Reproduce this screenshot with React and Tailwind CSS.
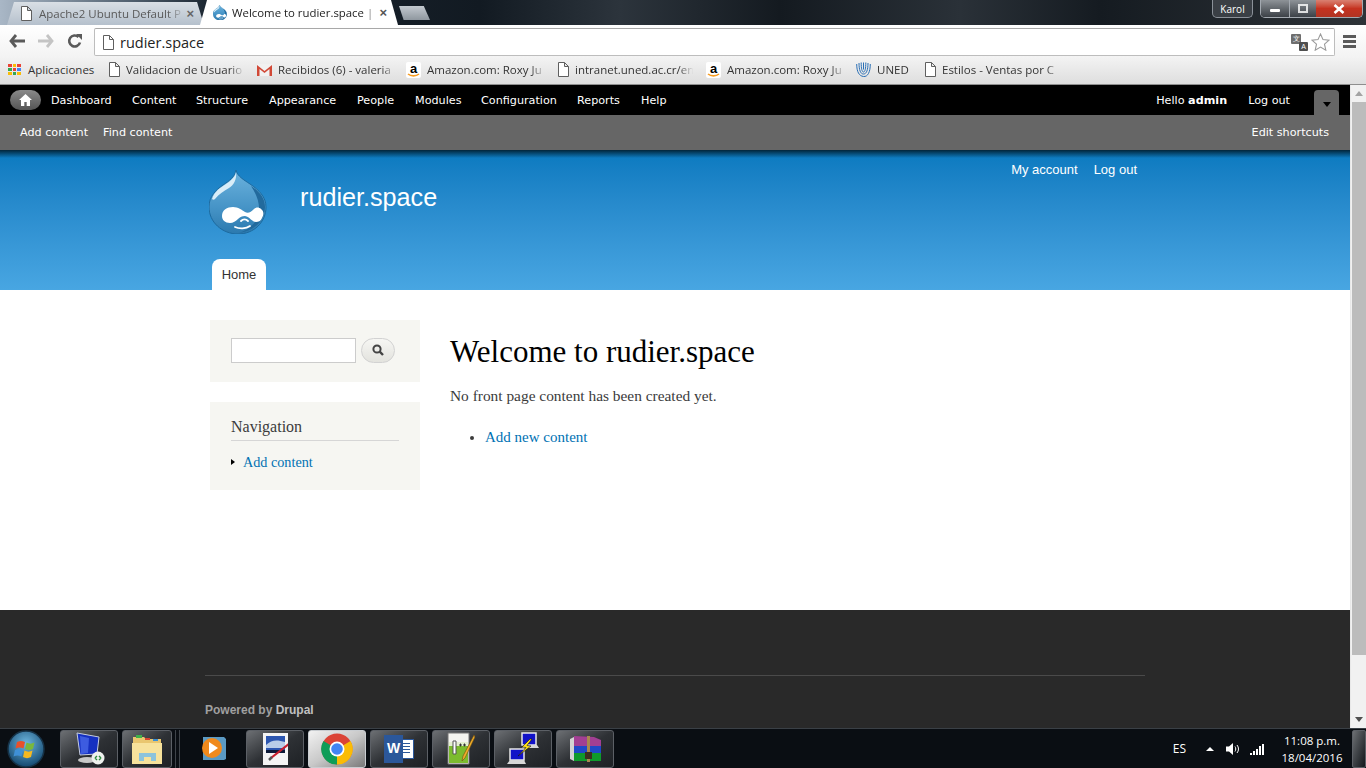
const adminLinks = [
  ['Dashboard', 'w-[81px]'],
  ['Content', 'w-[64px]'],
  ['Structure', 'w-[73px]'],
  ['Appearance', 'w-[88px]'],
  ['People', 'w-[58px]'],
  ['Modules', 'w-[66px]'],
  ['Configuration', 'w-[96px]'],
  ['Reports', 'w-[64px]'],
  ['Help', 'w-[40px]'],
];

const bookmarks = [
  { icon: 'doc', label: 'Validacion de Usuario', w: 'w-[149px]' },
  { icon: 'gmail', label: 'Recibidos (6) - valeria', w: 'w-[149px]' },
  { icon: 'amazon', label: 'Amazon.com: Roxy Ju', w: 'w-[151px]' },
  { icon: 'doc', label: 'intranet.uned.ac.cr/en', w: 'w-[149px]' },
  { icon: 'amazon', label: 'Amazon.com: Roxy Ju', w: 'w-[150px]' },
  { icon: 'uned', label: 'UNED', w: 'w-[68px]' },
  { icon: 'doc', label: 'Estilos - Ventas por C', w: 'w-[150px]' },
];

const DocIcon = () => (
  <svg width="12" height="15" viewBox="0 0 12 15" className="shrink-0">
    <path d="M1.5.5h6l4 4v10h-10z M7.5.5v4h4" fill="#fff" stroke="#5f5f5f" />
  </svg>
);

const GmailIcon = () => (
  <svg width="15" height="12" viewBox="0 0 15 12" className="shrink-0">
    <path d="M0 0h15v12H0z" fill="#f1f1f1" />
    <path d="M0 1l7.500 6L15 1v11h-2.500V5L7.500 9 2.500 5v7H0z" fill="#d14836" />
  </svg>
);

const AmazonIcon = () => (
  <div className="relative w-[15px] h-[16px] bg-white rounded-[2px] shrink-0 flex justify-center">
    <span className="font-['Liberation_Sans',sans-serif] font-bold text-[13px] leading-[13px] text-black">a</span>
    <svg width="13" height="5" viewBox="0 0 13 5" className="absolute left-px bottom-0">
      <path d="M1 1c3 2.500 8 2.500 11 0" fill="none" stroke="#f79c20" strokeWidth="1.600" />
    </svg>
  </div>
);

const UnedIcon = () => (
  <svg width="15" height="15" viewBox="0 0 15 15" className="shrink-0" fill="none" stroke="#2a6fb5">
    <path d="M.7 2c0 8 2.500 12 6.800 12.500S14.300 10 14.300 2" />
    <path d="M3 1c0 7 1.500 11 4.500 11S12 8 12 1" />
    <path d="M5.200 .5c0 6 .7 9.500 2.300 9.500s2.300-3.500 2.300-9.500" />
    <path d="M7.500 .5v7" />
  </svg>
);

const bookmarkIcons = { doc: DocIcon, gmail: GmailIcon, amazon: AmazonIcon, uned: UnedIcon };

// the drupal drop, used big in the header and small in the tab
const DrupalDrop = ({ size = 58 }) => (
  <svg width={size} height={size * 64 / 58} viewBox="0 0 58 64" className="shrink-0">
    <defs>
      <linearGradient id="dropFill" x1="0" y1="0" x2="0" y2="1">
        <stop offset="0" stopColor="#6cb3de" />
        <stop offset="0.6" stopColor="#4593c6" />
        <stop offset="1" stopColor="#2b79ae" />
      </linearGradient>
    </defs>
    <path d="M27 0c1 6 8 10 14 14 9 6 16 13 16 23 0 15-12 27-28 27S0 52 0 37c0-11 7-17 14-22C20 11 26 7 27 0z" fill="url(#dropFill)" stroke="#1c6a9f" strokeWidth="1" />
    <path d="M27 2c-1 6-7 10-13 14-5 3-9 7-11 13 1 1 2 1 3 0 4-5 9-8 14-11 5-3 8-9 7-16z" fill="#d9edf8" />
    <path d="M42 16c8 5 14 12 14 21 0 6-2 11-5 15-5 6-12 10-21 11 9-3 16-9 19-16 3-9 0-21-7-31z" fill="#226a9d" />
    <path d="M13 46c0-6 5-9 11-9 5 0 9 3 12 5 3 2 6 0 9-3 2-2 5-2 7 0 3 2 3 6 1 9-1 3-4 4-6 4-4 0-6-5-11-6-3 0-5 1-7 3-2 2-5 4-8 4-5 0-8-3-8-7z" fill="#fff" />
    <path d="M26 57c4 2 11 2 15-1M32 51c2-2 5-2 7 0" fill="none" stroke="#fff" strokeWidth="1.800" strokeLinecap="round" />
  </svg>
);

const WindowControls = () => (
  <div className="flex items-start gap-[7px] pr-[3px] text-white">
    <div className="w-[41px] h-[18px] rounded-b-[5px] border border-t-0 border-[#8b9199] bg-[#3a3f45] flex items-center justify-center font-['Open_Sans',sans-serif] text-[10px] leading-none">
      Karol
    </div>
    <div className="flex w-[103px] h-[18px] rounded-b-[5px] border border-t-0 border-[#a3a9b0] overflow-hidden">
      <div className="w-[29px] bg-gradient-to-b from-[#8e9398] to-[#3c4147] border-r border-[#a3a9b0] flex items-center justify-center">
        <div className="w-[10px] h-[3px] mt-[4px] bg-white rounded-[1px]" />
      </div>
      <div className="w-[26px] bg-gradient-to-b from-[#8e9398] to-[#3c4147] flex items-center justify-center">
        <div className="w-[10px] h-[9px] border-2 border-white/80" />
      </div>
      <div className="flex-1 bg-gradient-to-b from-[#d98071] via-[#c5321f] to-[#b03423] flex items-center justify-center">
        <svg width="12" height="10" viewBox="0 0 12 10">
          <path d="M1.500 1l9 8m0-8l-9 8" stroke="#fff" strokeWidth="2.600" />
        </svg>
      </div>
    </div>
  </div>
);

const TabStrip = () => (
  <div className="h-[25px] flex items-end bg-[linear-gradient(90deg,#a9b7c6_0px,#51606f_130px,#1a2530_210px,#121a22_480px,#2c343c_620px,#141a20_780px,#2a3138_960px,#151b21_1100px,#2e3338_1366px)]">
    <div className="w-[7px]" />
    <div className="w-[197px] h-[23px] pl-[13px] pr-[10px] flex items-center bg-gradient-to-b from-[#d9dfe5] to-[#b5c0cc] [clip-path:polygon(7px_0,calc(100%-7px)_0,100%_100%,0_100%)]">
      <DocIcon />
      <span className="ml-[7px] w-[146px] overflow-hidden whitespace-nowrap text-[11.5px] text-[#5a5a5a] font-['Open_Sans',sans-serif] [mask-image:linear-gradient(90deg,#000_88%,transparent)]">
        Apache2 Ubuntu Default P
      </span>
      <span className="ml-auto text-[13px] leading-none font-bold text-[#666] font-['Liberation_Sans',sans-serif]">×</span>
    </div>
    <div className="w-[198px] -ml-[4px] h-[25px] pl-[13px] pr-[11px] flex items-center bg-white [clip-path:polygon(7px_0,calc(100%-7px)_0,100%_100%,0_100%)]">
      <DrupalDrop size={14} />
      <span className="ml-[5px] w-[146px] overflow-hidden whitespace-nowrap text-[11.4px] text-[#222] font-['Open_Sans',sans-serif] [mask-image:linear-gradient(90deg,#000_90%,transparent)]">
        Welcome to rudier.space |
      </span>
      <span className="ml-auto text-[13px] leading-none font-bold text-[#555] font-['Liberation_Sans',sans-serif]">×</span>
    </div>
    <div className="w-[31px] h-[14px] mb-[5px] ml-[1px] bg-gradient-to-b from-[#c3c9cf] to-[#8f979f] [clip-path:polygon(0_0,80%_0,100%_100%,15%_100%)]" />
    <div className="ml-auto self-start">
      <WindowControls />
    </div>
  </div>
);

const Toolbar = () => (
  <div className="h-[32px] bg-gradient-to-b from-white to-[#f3f3f3] flex items-center pl-[9px] pr-[9px]">
    <svg width="16" height="14" viewBox="0 0 16 14" className="shrink-0">
      <path d="M7 1L2 7l5 6M2.500 7H16" fill="none" stroke="#5a5a5a" strokeWidth="2.800" />
    </svg>
    <svg width="16" height="14" viewBox="0 0 16 14" className="ml-[13px] shrink-0">
      <path d="M9 1l5 6-5 6M13.500 7H0" fill="none" stroke="#c4c4c4" strokeWidth="2.800" />
    </svg>
    <svg width="16" height="16" viewBox="0 0 16 16" className="ml-[13px] shrink-0">
      <path d="M13 9.500A5.500 5.500 0 1 1 11.500 4" fill="none" stroke="#5a5a5a" strokeWidth="2.600" />
      <path d="M9 1h6v6z" fill="#5a5a5a" />
    </svg>
    <div className="ml-[11px] w-[1241px] h-[28px] mt-[2px] bg-white border border-[#bdbdbd] border-t-[#a8a8a8] rounded-[2px] flex items-center pl-[7px] pr-[4px]">
      <DocIcon />
      <span className="ml-[6px] pt-[2px] text-[14.5px] text-[#222] font-['Open_Sans',sans-serif]">rudier.space</span>
      <div className="ml-auto flex items-center gap-[3px]">
        <div className="relative w-[17px] h-[17px]">
          <div className="absolute left-0 top-0 w-[10px] h-[10px] bg-[#6e6e6e] rounded-[1px] text-white text-[7px] leading-[10px] text-center">文</div>
          <div className="absolute right-0 bottom-0 w-[9px] h-[9px] bg-[#4f4f4f] rounded-[1px] text-white text-[7px] leading-[9px] text-center font-['Liberation_Sans',sans-serif]">A</div>
        </div>
        <svg width="19" height="18" viewBox="0 0 19 18">
          <path d="M9.500 1l2.500 5.600 6 .6-4.500 4 1.300 6-5.300-3.100-5.300 3.100 1.300-6-4.500-4 6-.6z" fill="#fff" stroke="#9a9a9a" strokeWidth="1.100" />
        </svg>
      </div>
    </div>
    <div className="ml-[8px] flex flex-col gap-[2px]">
      <div className="w-[13px] h-[3px] bg-[#5a5a5a]" />
      <div className="w-[13px] h-[3px] bg-[#5a5a5a]" />
      <div className="w-[13px] h-[3px] bg-[#5a5a5a]" />
    </div>
  </div>
);

const BookmarksBar = () => (
  <div className="h-[28px] pb-[2px] bg-gradient-to-b from-[#f3f3f3] to-[#dedede] border-b border-[#8e8e8e] flex items-center pl-[8px] font-['Open_Sans',sans-serif] text-[11.5px] text-[#333]">
    <div className="w-[100px] flex items-center">
      <div className="grid grid-cols-3 gap-px w-[13px]">
        {['#ea4335', '#fbbc05', '#ea4335', '#34a853', '#ea4335', '#4285f4', '#fbbc05', '#34a853', '#fbbc05'].map((c, i) => (
          <div key={i} className="h-[3px]" style={{ background: c }} />
        ))}
      </div>
      <span className="ml-[7px] whitespace-nowrap">Aplicaciones</span>
    </div>
    {bookmarks.map((b, i) => {
      const Icon = bookmarkIcons[b.icon];
      return (
        <div key={i} className={`${b.w} flex items-center`}>
          <Icon />
          <span className="ml-[6px] w-[126px] overflow-hidden whitespace-nowrap [mask-image:linear-gradient(90deg,#000_82%,transparent_94%)]">{b.label}</span>
        </div>
      );
    })}
  </div>
);

const AdminBar = () => (
  <div className="font-['DejaVu_Sans',sans-serif] text-[11.2px] text-white shrink-0">
    <div className="h-[30px] bg-black flex items-center pl-[10px] pr-[11px]">
      <div className="w-[31px] h-[20px] rounded-[10px] bg-gradient-to-b from-[#8a8a8a] to-[#555] flex items-center justify-center">
        <svg width="13" height="12" viewBox="0 0 13 12">
          <path d="M6.500 0L0 6h2v6h3.300V8h2.400v4H11V6h2z" fill="#fff" />
        </svg>
      </div>
      <div className="ml-[10px] pt-[2px] flex">
        {adminLinks.map(([label, w]) => (
          <span key={label} className={w}>{label}</span>
        ))}
      </div>
      <span className="ml-auto pt-[2px]">Hello <b>admin</b></span>
      <span className="ml-[21px] pt-[2px]">Log out</span>
      <div className="ml-[24px] self-end w-[25px] h-[25px] bg-[#666] rounded-t-[4px] flex items-center justify-center">
        <div className="w-0 h-0 mt-[3px] border-x-[4px] border-x-transparent border-t-[5px] border-t-black" />
      </div>
    </div>
    <div className="h-[35px] pt-[1px] bg-[#666] flex items-center pl-[20px] pr-[21px] gap-[15px]">
      <span>Add content</span>
      <span>Find content</span>
      <span className="ml-auto">Edit shortcuts</span>
    </div>
  </div>
);

const SiteHeader = () => (
  <div className="h-[140px] shrink-0 bg-gradient-to-b from-[#0779bf] to-[#48a6e2] relative">
    <div className="absolute inset-x-0 top-0 h-[8px] bg-gradient-to-b from-black/70 to-transparent" />
    <div className="w-[940px] mx-auto h-full flex flex-col font-['Liberation_Sans',sans-serif]">
      <div className="flex justify-end gap-[16px] pt-[11px] pr-[8px] text-[13px] leading-[18px] text-white h-[21px] box-content">
        <span>My account</span>
        <span>Log out</span>
      </div>
      <div className="flex items-start pl-[4px] h-[77px] -mt-[12px]">
        <DrupalDrop />
        <span className="ml-[33px] mt-[11px] text-[25.2px] leading-[32px] text-white">rudier.space</span>
      </div>
      <div className="mt-auto pl-[7px]">
        <div className="w-[54px] h-[31px] bg-white rounded-t-[8px] flex items-center justify-center text-[13px] text-[#333]">Home</div>
      </div>
    </div>
  </div>
);

const MainContent = () => (
  <div className="h-[320px] shrink-0 bg-white font-['Liberation_Serif',serif] text-[#3b3b3b]">
    <div className="w-[940px] mx-auto flex pt-[30px] pl-[5px]">
      <div className="w-[210px] shrink-0 flex flex-col gap-[20px]">
        <div className="h-[62px] pb-[2px] bg-[#f6f6f2] flex items-center pl-[21px]">
          <div className="w-[125px] h-[25px] bg-white border border-[#ccc]" />
          <div className="ml-[5px] w-[34px] h-[25px] rounded-[13px] bg-gradient-to-b from-[#f6f6f3] to-[#e3e3de] border border-[#d2d2d2] flex items-center justify-center">
            <svg width="12" height="12" viewBox="0 0 12 12">
              <circle cx="5" cy="5" r="3.600" fill="none" stroke="#444" strokeWidth="2" />
              <path d="M7.700 7.700L11 11" stroke="#444" strokeWidth="2.400" />
            </svg>
          </div>
        </div>
        <div className="h-[88px] bg-[#f6f6f2] pl-[21px] pr-[21px] pt-[15px]">
          <div className="text-[16px] leading-[20px] pb-[3px] border-b border-[#d6d6d6]">Navigation</div>
          <div className="mt-[11px] flex items-center text-[14.2px] leading-[20px]">
            <div className="w-0 h-0 border-y-[3.500px] border-y-transparent border-l-[4px] border-l-black" />
            <a className="ml-[8px] text-[#0071b3]">Add content</a>
          </div>
        </div>
      </div>
      <div className="ml-[30px]">
        <h1 className="text-[31px] leading-[36px] text-black mt-[14px]">Welcome to rudier.space</h1>
        <p className="mt-[16px] text-[15.4px] leading-[20px]">No front page content has been created yet.</p>
        <ul className="mt-[21px] ml-[35px] list-disc text-[15px] leading-[20px]">
          <li><a className="text-[#0071b3]">Add new content</a></li>
        </ul>
      </div>
    </div>
  </div>
);

const Footer = () => (
  <div className="flex-1 bg-[#292929] font-['Liberation_Sans',sans-serif]">
    <div className="w-[940px] mx-auto pt-[65px]">
      <div className="border-t border-[#4a4a4a] pt-[27px] text-[12px] leading-[14px] font-bold text-[#a0a0a0]">
        Powered by <span className="text-[#c0c0c0]">Drupal</span>
      </div>
    </div>
  </div>
);

const Scrollbar = () => (
  <div className="w-[16px] bg-[#f1f1f1] flex flex-col items-center border-l border-[#e8e8e8]">
    <div className="mt-[6px] w-0 h-0 border-x-[4px] border-x-transparent border-b-[5px] border-b-[#a3a3a3]" />
    <div className="mt-[6px] w-[14px] h-[553px] bg-[#bcbcbc]" />
    <div className="mt-auto mb-[6px] w-0 h-0 border-x-[4px] border-x-transparent border-t-[5px] border-t-[#505050]" />
  </div>
);

const TaskButton = ({ w = 'w-[58px]', active, children }) => (
  <div className={`${w} h-[38px] rounded-[3px] border flex items-center justify-center ${active ? 'border-[#c9cdd1] bg-gradient-to-br from-[#f2f2f2] via-[#c8c8c8] to-[#7a7a7a]' : 'border-[#5c6066] bg-gradient-to-br from-[#6d7074] via-[#2e3135] to-[#1e2125]'}`}>
    {children}
  </div>
);

const TaskBar = () => (
  <div className="h-[40px] shrink-0 bg-[#0a0e13] border-t border-[#3a4046] flex items-center pl-[6px] text-white font-['Open_Sans',sans-serif]">
    {/* start orb */}
    <svg width="40" height="38" viewBox="0 0 40 38" className="shrink-0">
      <defs>
        <radialGradient id="orb" cx="0.5" cy="0.35" r="0.7">
          <stop offset="0" stopColor="#6db7e0" />
          <stop offset="1" stopColor="#0d3f66" />
        </radialGradient>
      </defs>
      <circle cx="20" cy="19" r="18" fill="url(#orb)" stroke="#163247" strokeWidth="1.500" />
      <path d="M11 12c3-1.500 5-1.500 8 0l-1.500 6.500c-3-1.500-5-1.500-8 0z" fill="#e8502a" />
      <path d="M20.500 12.500c3 1.500 5 1.500 8 0L27 19c-3 1.500-5 1.500-8 0z" fill="#79b83c" />
      <path d="M9 20c3-1.500 5-1.500 8 0l-1.500 6.500c-3-1.500-5-1.500-8 0z" fill="#3f90d6" />
      <path d="M18.500 20.500c3 1.500 5 1.500 8 0L25 27c-3 1.500-5 1.500-8 0z" fill="#f5b921" />
    </svg>
    <div className="ml-[14px] flex gap-[4px]">
      <TaskButton>
        <svg width="34" height="34" viewBox="0 0 34 34">
          <path d="M5 1l22 4-2 17-17 1z" fill="#1530c0" stroke="#c6cdde" />
          <path d="M8 4l9 2-1 15-7 1z" fill="#3d5ce0" />
          <ellipse cx="15" cy="28" rx="9" ry="3" fill="#c8c8c8" />
          <circle cx="26" cy="26" r="6.500" fill="#eef1ee" />
          <path d="M23 26l2-2m-2 2l2 2m4-2l-2-2m2 2l-2 2" stroke="#2a8a3c" strokeWidth="1.400" />
        </svg>
      </TaskButton>
      <TaskButton w="w-[50px]">
        <svg width="32" height="30" viewBox="0 0 32 30">
          <path d="M2 3h11l2 2h15v8H2z" fill="#e9c66f" />
          <path d="M5 1h6v3H5z" fill="#3fb04a" />
          <path d="M14 4h5v2h-5z" fill="#d8442f" />
          <path d="M22 5h5v2h-5z" fill="#3a8fd6" />
          <path d="M1 9h30v21H1z" fill="#f7e29c" />
          <path d="M8 27v-8h17v8h-5v-4h-7v4z" fill="#8cc3dc" />
        </svg>
      </TaskButton>
    </div>
    <div className="ml-[3px] h-[38px] w-[5px] border-x border-[#3f444a]" />
    <div className="w-[66px] flex justify-center">
      <svg width="27" height="25" viewBox="0 0 27 25">
        <path d="M3 1h21l2 2v20l-2 1H3z" fill="#5b9ac4" />
        <circle cx="12" cy="12" r="10" fill="#f08a1d" />
        <path d="M9 6l9 6-9 6z" fill="#fff" />
      </svg>
    </div>
    <div className="flex gap-[4px]">
      <TaskButton>
        <svg width="25" height="32" viewBox="0 0 25 32">
          <path d="M0 0h25v32H0z" fill="#f4f4f4" />
          <path d="M3 3h19v17H3z" fill="#2c56b0" />
          <path d="M3 12c6-6 12-5 19-3v6H3z" fill="#b9cde8" />
          <path d="M3 17h19v3H3z" fill="#0c1a38" />
          <path d="M27 10L8 25" stroke="#c7202f" strokeWidth="2.200" />
          <path d="M9 24l-3 3" stroke="#555" strokeWidth="2.500" />
        </svg>
      </TaskButton>
      <TaskButton active>
        <svg width="32" height="32" viewBox="0 0 32 32">
          <circle cx="16" cy="16" r="15.500" fill="#db4437" />
          <path d="M16 16L29.500 8A15.500 15.500 0 0 1 16 31.500z" fill="#fbbc05" />
          <path d="M16 16L16 31.500A15.500 15.500 0 0 1 2.500 8z" fill="#0f9d58" />
          <circle cx="16" cy="16" r="7.500" fill="#fff" />
          <circle cx="16" cy="16" r="5.800" fill="#4285f4" />
        </svg>
      </TaskButton>
      <TaskButton>
        <div className="relative w-[30px] h-[28px] flex items-center">
          <div className="absolute right-0 top-[4px] w-[17px] h-[20px] bg-white border border-[#2b579a]">
            <div className="mx-[3px] mt-[3px] h-[11px] bg-[repeating-linear-gradient(#2b579a_0,#2b579a_1px,#fff_1px,#fff_3px)]" />
          </div>
          <div className="relative w-[19px] h-[28px] bg-[#2b579a] flex items-center justify-center font-['Liberation_Sans',sans-serif] font-bold text-[14px] text-white">W</div>
        </div>
      </TaskButton>
      <TaskButton>
        <svg width="28" height="33" viewBox="0 0 28 33">
          <path d="M1 1h21v31H1z" fill="#f4f4f0" stroke="#777" />
          <path d="M2 10h19v4H2z" fill="#e4efd0" />
          <path d="M2 14h19v17H2z" fill="#7cbb2e" />
          <path d="M6 9v13h3V9z" fill="#fff" stroke="#555" />
          <path d="M12 13h3M13.500 11.500v3M16 13h3M17.500 11.500v3" stroke="#333" />
          <path d="M27 3L16 24l-1 5 3-3L28 5z" fill="#f0ad2a" stroke="#6b4d10" strokeWidth=".6" />
        </svg>
      </TaskButton>
      <TaskButton>
        <svg width="32" height="34" viewBox="0 0 32 34">
          <path d="M15 1h14v12H15z" fill="#1212c8" stroke="#e8e8e8" strokeWidth="1.500" />
          <path d="M17 13h13l2 3H15z" fill="#d8d8d8" />
          <path d="M3 17h14v11H3z" fill="#1212c8" stroke="#e8e8e8" strokeWidth="1.500" />
          <path d="M3 28h14l2 4H0z" fill="#d8d8d8" />
          <path d="M23 7l-8 8 4 .5-8 8.500 13-10-4-.5 5-6.500z" fill="#ffe21a" stroke="#111" strokeWidth=".6" />
        </svg>
      </TaskButton>
      <TaskButton>
        <svg width="34" height="28" viewBox="0 0 34 28">
          <path d="M6 1l20 1 7 3v7H6z" fill="#a23f93" />
          <path d="M6 11h27v7H6z" fill="#2048c8" />
          <path d="M6 18h27v8H6z" fill="#0f9a2c" />
          <path d="M2 4l4-2v24l-4-2z" fill="#d4d4d4" />
          <path d="M19 1h3v26h-3z" fill="#a8884f" />
          <path d="M17 17h7v7h-7z" fill="#3d3020" />
        </svg>
      </TaskButton>
    </div>
    <div className="ml-auto flex items-center h-full">
      <span className="text-[12px]">ES</span>
      <div className="ml-[20px] w-0 h-0 border-x-[4px] border-x-transparent border-b-[4px] border-b-white" />
      <svg width="14" height="14" viewBox="0 0 14 14" className="ml-[12px]" fill="none" stroke="#fff">
        <path d="M0 4.500h3L7 1v12L3 9.500H0z" fill="#fff" stroke="none" />
        <path d="M9 4.500c1 1.500 1 3.500 0 5M11 3c2 2.500 2 5.500 0 8" />
      </svg>
      <svg width="15" height="12" viewBox="0 0 15 12" className="ml-[10px]" fill="#fff">
        <path d="M0 10h2v2H0zM3 8h2v4H3zM6 6h2v6H6zM9 3h2v9H9zM12 1h2v11h-2z" />
      </svg>
      <div className="ml-[17px] w-[60px] flex flex-col items-center text-[11.5px] leading-[17px] whitespace-nowrap">
        <span>11:08 p.m.</span>
        <span>18/04/2016</span>
      </div>
      <div className="ml-[10px] w-[14px] h-[38px] border border-[#5c6066] rounded-[2px] bg-gradient-to-br from-[#6d7074] to-[#14181c]" />
    </div>
  </div>
);

const App = () => (
  <div className="w-[1366px] h-[768px] overflow-hidden flex flex-col">
    <TabStrip />
    <Toolbar />
    <BookmarksBar />
    <div className="flex-1 flex min-h-0">
      <div className="flex-1 flex flex-col min-w-0">
        <AdminBar />
        <SiteHeader />
        <MainContent />
        <Footer />
      </div>
      <Scrollbar />
    </div>
    <TaskBar />
  </div>
);

export default App;
